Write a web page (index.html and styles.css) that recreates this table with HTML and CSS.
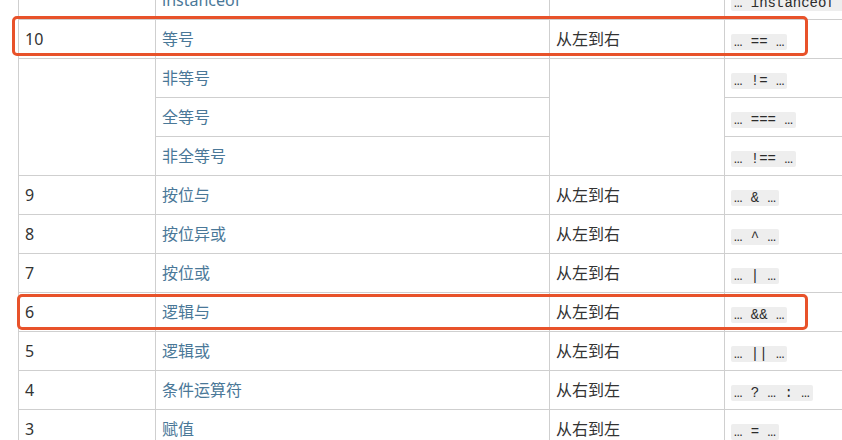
FILE: index.html
```html
<!DOCTYPE html>
<html lang="zh">
<head>
<meta charset="utf-8">
<link rel="stylesheet" href="styles.css">
</head>
<body>
<div class="page">
  <table class="ops">
    <colgroup>
      <col class="c1"><col class="c2"><col class="c3"><col class="c4">
    </colgroup>
    <tbody>
      <tr><td></td><td class="name">instanceof</td><td></td><td><code>… instanceof …</code></td></tr>
      <tr><td>10</td><td class="name">等号</td><td>从左到右</td><td><code>… == …</code></td></tr>
      <tr><td rowspan="3"></td><td class="name">非等号</td><td rowspan="3"></td><td><code>… != …</code></td></tr>
      <tr><td class="name">全等号</td><td><code>… === …</code></td></tr>
      <tr><td class="name">非全等号</td><td><code>… !== …</code></td></tr>
      <tr><td>9</td><td class="name">按位与</td><td>从左到右</td><td><code>… &amp; …</code></td></tr>
      <tr><td>8</td><td class="name">按位异或</td><td>从左到右</td><td><code>… ^ …</code></td></tr>
      <tr><td>7</td><td class="name">按位或</td><td>从左到右</td><td><code>… | …</code></td></tr>
      <tr><td>6</td><td class="name">逻辑与</td><td>从左到右</td><td><code>… &amp;&amp; …</code></td></tr>
      <tr><td>5</td><td class="name">逻辑或</td><td>从左到右</td><td><code>… || …</code></td></tr>
      <tr><td>4</td><td class="name">条件运算符</td><td>从右到左</td><td><code>… ? … : …</code></td></tr>
      <tr><td>3</td><td class="name">赋值</td><td>从右到左</td><td><code>… = …</code></td></tr>
    </tbody>
  </table>
  <div class="mark mark-eq"></div>
  <div class="mark mark-and"></div>
</div>
</body>
</html>
```

FILE: styles.css
```css
html, body {
  margin: 0;
  padding: 0;
  background: #fff;
}
body {
  width: 842px;
  height: 440px;
  overflow: hidden;
  font-family: "Noto Sans", "Noto Sans CJK SC", sans-serif;
  font-size: 16px;
  color: #333;
}
.page {
  position: relative;
  padding-left: 18px;
  height: 440px;
  overflow: hidden;
}
.ops {
  border-collapse: collapse;
  table-layout: fixed;
  width: 906px;
  margin-top: -20px;
}
.c1 { width: 137px; }
.c2 { width: 394px; }
.c3 { width: 175px; }
.c4 { width: 200px; }
.ops tr {
  height: 39px;
}
.ops td {
  border: 1px solid #cfcfcf;
  padding: 0 6px;
  line-height: 20px;
  vertical-align: middle;
  white-space: nowrap;
  overflow: hidden;
}
.ops td.name {
  color: #4a7898;
}
code {
  font-family: "Liberation Mono", "DejaVu Sans Mono", monospace;
  font-size: 14px;
  line-height: 16px;
  display: inline-block;
  background: #eeeeee;
  color: #2b2b2b;
  padding: 0 3px;
  border-radius: 2px;
  vertical-align: -1px;
}
.mark {
  position: absolute;
  border: 3px solid #e8522a;
  border-radius: 5px;
  box-sizing: border-box;
}
.mark-eq {
  left: 12px;
  top: 16px;
  width: 796px;
  height: 40px;
}
.mark-and {
  left: 17px;
  top: 294px;
  width: 791px;
  height: 36px;
}
```
